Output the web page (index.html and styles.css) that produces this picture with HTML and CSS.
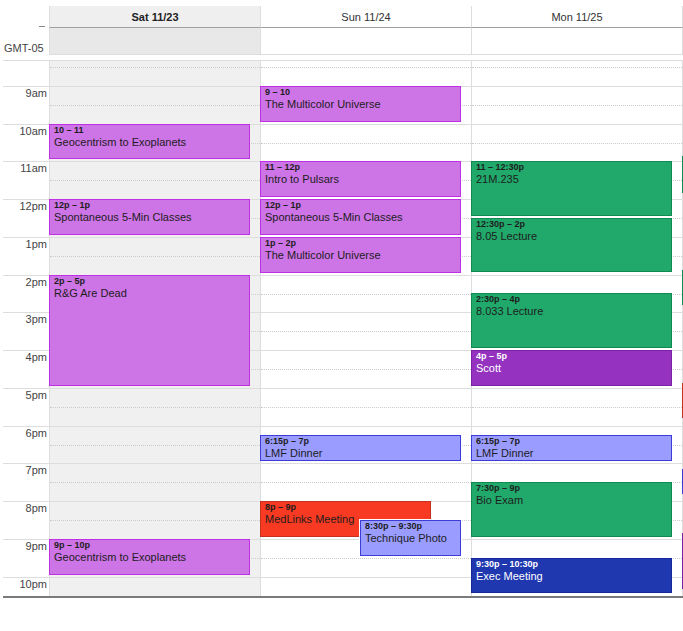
FILE: index.html
```html
<!DOCTYPE html>
<html lang="en">
<head>
  <meta charset="UTF-8" />
  <meta name="viewport" content="width=device-width, initial-scale=1.0"/>
  <title>Week View</title>
  <link rel="stylesheet" href="styles.css">
</head>
<body>

<div class="cal">

  <!-- Day headers -->
  <div class="head-row">
    <div class="gutter"><span class="dash"></span></div>
    <div class="day-head today">Sat 11/23</div>
    <div class="day-head">Sun 11/24</div>
    <div class="day-head">Mon 11/25</div>
    <div class="day-head"></div>
  </div>

  <!-- All-day row -->
  <div class="allday-row">
    <div class="gutter tz">GMT-05</div>
    <div class="allday today"></div>
    <div class="allday"></div>
    <div class="allday"></div>
    <div class="allday"></div>
  </div>

  <!-- Timed grid (top/height come from event times, 37.75px per hour from 8am) -->
  <div class="grid">
    <div class="grid-inner">
      <div class="times">
        <div class="tl"></div>
        <div class="tl">9am</div>
        <div class="tl">10am</div>
        <div class="tl">11am</div>
        <div class="tl">12pm</div>
        <div class="tl">1pm</div>
        <div class="tl">2pm</div>
        <div class="tl">3pm</div>
        <div class="tl">4pm</div>
        <div class="tl">5pm</div>
        <div class="tl">6pm</div>
        <div class="tl">7pm</div>
        <div class="tl">8pm</div>
        <div class="tl">9pm</div>
        <div class="tl">10pm</div>
      </div>

      <div class="day today">
        <div class="lines"></div>
        <div class="ev purple" style="top:75.5px;height:35.75px"><div class="ev-time">10 – 11</div><div class="ev-title">Geocentrism to Exoplanets</div></div>
        <div class="ev purple" style="top:151px;height:35.75px"><div class="ev-time">12p – 1p</div><div class="ev-title">Spontaneous 5-Min Classes</div></div>
        <div class="ev purple" style="top:226.5px;height:111.25px"><div class="ev-time">2p – 5p</div><div class="ev-title">R&amp;G Are Dead</div></div>
        <div class="ev purple" style="top:490.75px;height:35.75px"><div class="ev-time">9p – 10p</div><div class="ev-title">Geocentrism to Exoplanets</div></div>
      </div>

      <div class="day">
        <div class="lines"></div>
        <div class="ev purple" style="top:37.75px;height:35.75px"><div class="ev-time">9 – 10</div><div class="ev-title">The Multicolor Universe</div></div>
        <div class="ev purple" style="top:113.25px;height:35.75px"><div class="ev-time">11 – 12p</div><div class="ev-title">Intro to Pulsars</div></div>
        <div class="ev purple" style="top:151px;height:35.75px"><div class="ev-time">12p – 1p</div><div class="ev-title">Spontaneous 5-Min Classes</div></div>
        <div class="ev purple" style="top:188.75px;height:35.75px"><div class="ev-time">1p – 2p</div><div class="ev-title">The Multicolor Universe</div></div>
        <div class="ev periwinkle" style="top:386.9px;height:26.3px"><div class="ev-time">6:15p – 7p</div><div class="ev-title">LMF Dinner</div></div>
        <div class="ev red" style="top:453px;height:35.75px;width:171px"><div class="ev-time">8p – 9p</div><div class="ev-title">MedLinks Meeting</div></div>
        <div class="ev periwinkle stacked" style="top:471.9px;height:35.75px;left:99px;width:101px"><div class="ev-time">8:30p – 9:30p</div><div class="ev-title">Technique Photo</div></div>
      </div>

      <div class="day">
        <div class="lines"></div>
        <div class="ev green" style="top:113.25px;height:54.6px"><div class="ev-time">11 – 12:30p</div><div class="ev-title">21M.235</div></div>
        <div class="ev green" style="top:169.9px;height:54.6px"><div class="ev-time">12:30p – 2p</div><div class="ev-title">8.05 Lecture</div></div>
        <div class="ev green" style="top:245.4px;height:54.6px"><div class="ev-time">2:30p – 4p</div><div class="ev-title">8.033 Lecture</div></div>
        <div class="ev plum" style="top:302px;height:35.75px"><div class="ev-time">4p – 5p</div><div class="ev-title">Scott</div></div>
        <div class="ev periwinkle" style="top:386.9px;height:26.3px"><div class="ev-time">6:15p – 7p</div><div class="ev-title">LMF Dinner</div></div>
        <div class="ev green" style="top:434.1px;height:54.6px"><div class="ev-time">7:30p – 9p</div><div class="ev-title">Bio Exam</div></div>
        <div class="ev navy" style="top:509.6px;height:35.75px"><div class="ev-time">9:30p – 10:30p</div><div class="ev-title">Exec Meeting</div></div>
      </div>

      <div class="day">
        <div class="lines"></div>
        <div class="ev green" style="top:108px;height:37px"></div>
        <div class="ev green" style="top:222px;height:35px"></div>
        <div class="ev red" style="top:335px;height:35px"></div>
        <div class="ev periwinkle" style="top:421px;height:25px"></div>
        <div class="ev plum" style="top:485px;height:56px"></div>
      </div>
    </div>
  </div>
</div>

<script>
  // hour rows with a dotted half-hour line, 8am to 10pm
  document.querySelectorAll(".lines").forEach(function (col) {
    for (let i = 0; i < 15; i++) {
      const slot = document.createElement("div");
      slot.className = "slot";
      col.appendChild(slot);
    }
  });
</script>

</body>
</html>
```

FILE: styles.css
```css
html, body {
  overflow: hidden;
}

body {
  margin: 0;
  font-family: "Liberation Sans", Arial, sans-serif;
  color: #222;
  background: #fff;
}

.cal {
  width: 900px;
}

.gutter {
  width: 49px;
  flex: none;
  box-sizing: border-box;
}

/* Header */
.head-row {
  display: flex;
  margin-top: 6px;
}

.head-row .gutter {
  display: flex;
  justify-content: flex-end;
  align-items: flex-end;
  padding-right: 4px;
}

.dash {
  width: 6px;
  height: 1px;
  background: #888;
  margin-bottom: 1px;
}

.day-head {
  width: 211px;
  flex: none;
  box-sizing: border-box;
  height: 22px;
  border-left: 1px solid #ddd;
  border-bottom: 1px solid #a0a0a0;
  line-height: 22px;
  text-align: center;
  font-size: 11px;
  color: #333;
}

.day-head.today {
  background: #efefef;
  font-weight: bold;
  color: #222;
}

/* All-day */
.allday-row {
  display: flex;
  height: 27px;
  margin-bottom: 5px;
}

.tz {
  font-size: 11px;
  line-height: 13px;
  color: #444;
  padding: 14px 0 0 4px;
}

.allday {
  width: 211px;
  flex: none;
  box-sizing: border-box;
  border-left: 1px solid #ddd;
  border-bottom: 1px solid #ddd;
}

.allday.today {
  background: #e8e8e8;
}

/* Timed grid */
.grid {
  margin-left: 3px;
  height: 535px;
  overflow: hidden;
  border-top: 1px solid #ddd;
  border-bottom: 2px solid #7a7a7a;
}

.grid-inner {
  display: flex;
  margin-top: -13px;
}

.times {
  width: 46px;
  flex: none;
}

.tl {
  height: 37.75px;
  box-sizing: border-box;
  border-top: 1px solid #ddd;
  padding: 0 2px 0 0;
  text-align: right;
  font-size: 11px;
  line-height: 13px;
  color: #444;
}

.day {
  position: relative;
  width: 211px;
  flex: none;
  box-sizing: border-box;
  border-left: 1px solid #ddd;
}

.day.today {
  background: #f0f0f0;
}

.slot {
  height: 37.75px;
  box-sizing: border-box;
  border-top: 1px solid #ddd;
}

.slot::after {
  content: "";
  display: block;
  margin-top: 18px;
  border-top: 1px dotted #ccc;
}

/* Events */
.ev {
  position: absolute;
  left: -1px;
  width: 201px;
  box-sizing: border-box;
  border: 1px solid;
  padding: 0 4px;
  overflow: hidden;
  color: #1d1d1d;
}

.ev-time {
  font-size: 9px;
  line-height: 11px;
  font-weight: bold;
  white-space: nowrap;
}

.ev-title {
  font-size: 11px;
  line-height: 13px;
  white-space: nowrap;
}

.ev.stacked {
  box-shadow: 0 0 0 1px #fff;
}

.purple {
  background: #cd74e6;
  border-color: #bf2fe3;
}

.green {
  background: #21a96b;
  border-color: #0f8a50;
}

.plum {
  background: #9533c0;
  border-color: #7a22a6;
  color: #fff;
}

.periwinkle {
  background: #9a9cff;
  border-color: #3d3dd6;
}

.red {
  background: #f83a22;
  border-color: #c4321f;
}

.navy {
  background: #1f38b0;
  border-color: #16289a;
  color: #fff;
}
```
